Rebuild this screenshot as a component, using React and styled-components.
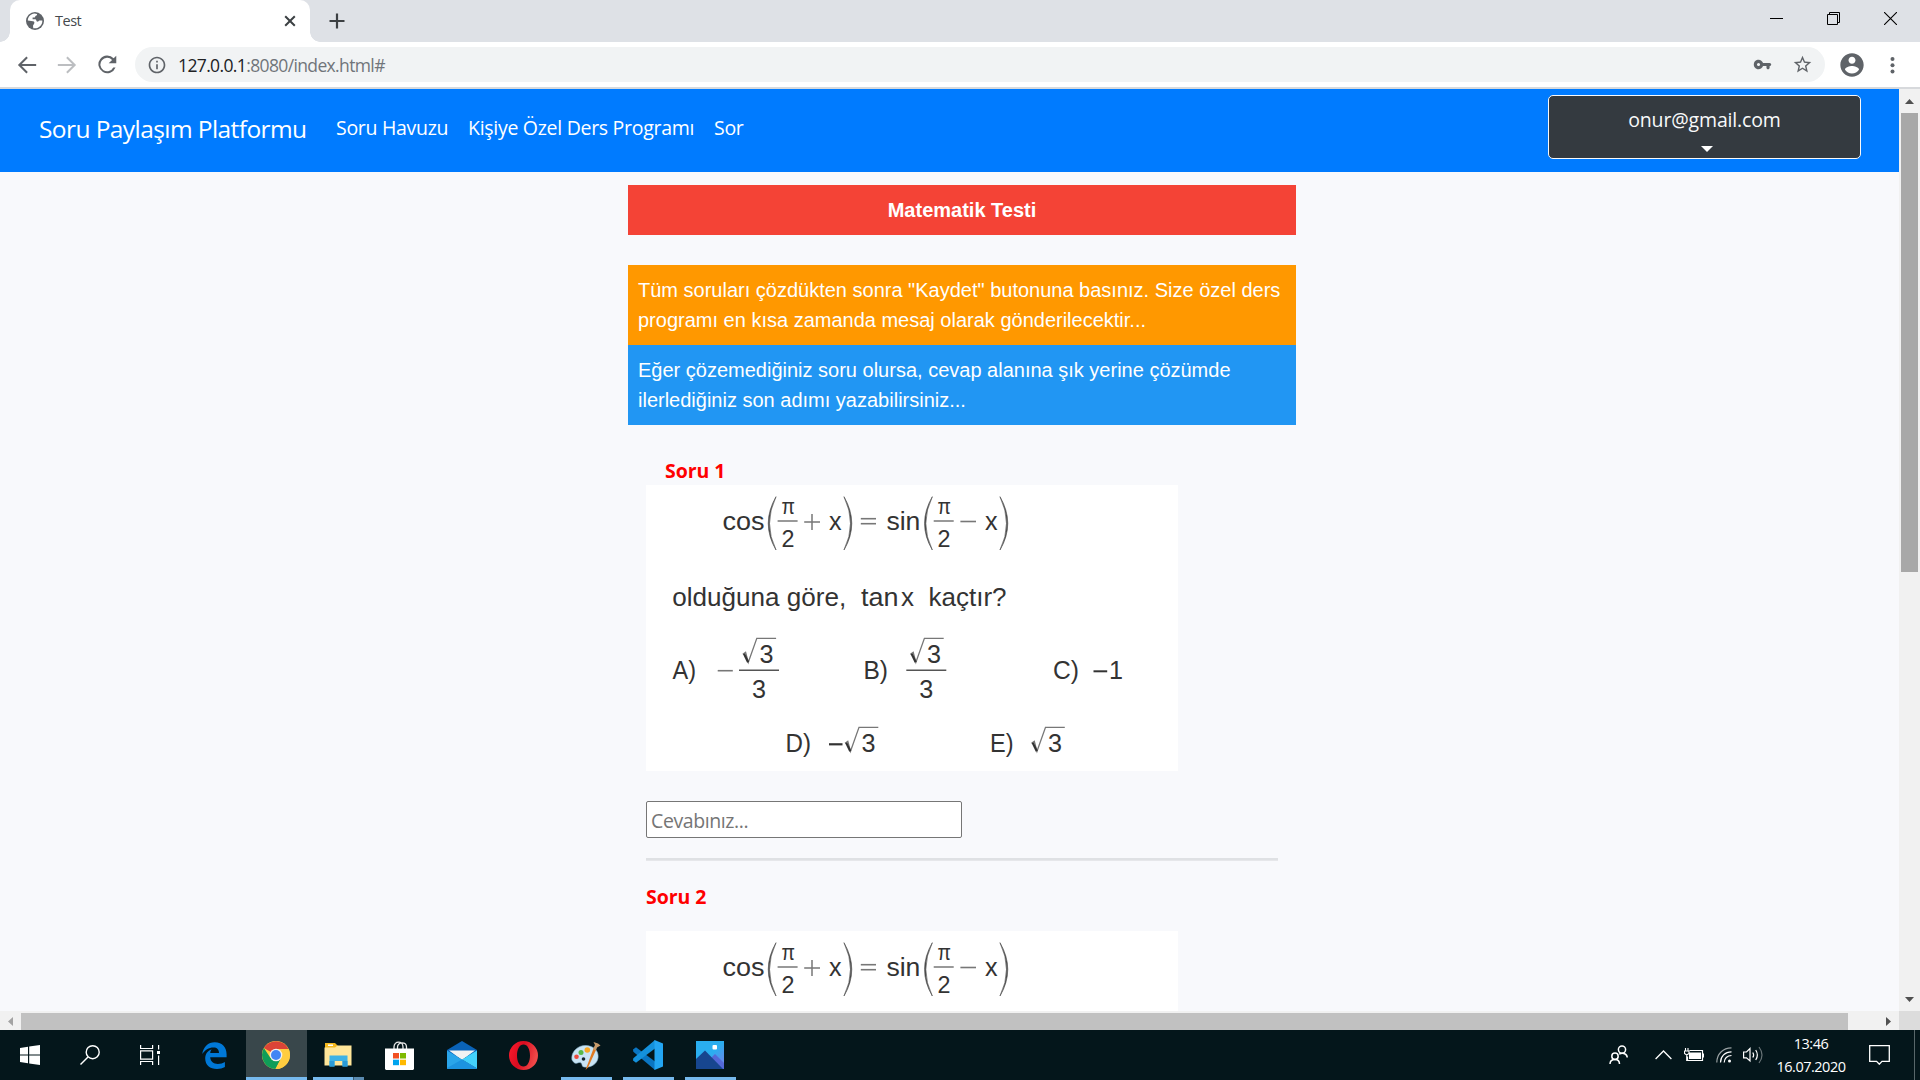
import React from "react";
import styled, { createGlobalStyle } from "styled-components";

const UI = `"Open Sans", "Noto Sans", sans-serif`;
const ARIAL = `"Liberation Sans", Arial, sans-serif`;

const GlobalStyle = createGlobalStyle`
  * { box-sizing: border-box; }
  html, body { margin: 0; padding: 0; overflow: hidden; }
  svg { display: block; flex: none; }
`;

const Screen = styled.div`
  width: 1920px;
  height: 1080px;
  display: flex;
  flex-direction: column;
  overflow: hidden;
  background: #f8f9fc;
  font-family: ${UI};
`;

const Label = styled.span`
  display: block;
  white-space: nowrap;
  font-size: ${(p) => p.$size}px;
  line-height: ${(p) => p.$line}px;
  letter-spacing: ${(p) => p.$track || 0}px;
  font-weight: ${(p) => p.$weight || 400};
  color: ${(p) => p.$color};
`;

/* ---------- browser chrome ---------- */

const TabStrip = styled.header`
  height: 42px;
  flex: none;
  display: flex;
  background: #dee1e6;
`;

const TabEdge = styled.div`
  width: 10px;
  height: 42px;
  background: radial-gradient(circle at ${(p) => (p.$right ? "100%" : "0")} 32px, #dee1e6 9.5px, #fff 10px);
  clip-path: inset(32px 0 0 0);
`;

const Tab = styled.div`
  width: 300px;
  height: 42px;
  padding: 0 14px 0 16px;
  display: flex;
  align-items: center;
  background: #fff;
  border-radius: 10px 10px 0 0;
`;

const TabTitle = styled.div`
  flex: 1;
  padding-left: 11px;
`;

const NewTab = styled.div`
  padding: 13px 0 0 9px;
`;

const WindowButtons = styled.div`
  margin-left: auto;
  padding-right: 1px;
  display: flex;
  height: 37px;
`;

const WindowButton = styled.div`
  width: 57px;
  display: flex;
  align-items: center;
  justify-content: center;
`;

const Toolbar = styled.div`
  height: 47px;
  flex: none;
  display: flex;
  align-items: center;
  padding: 0 17px 0 17px;
  background: #fff;
  border-bottom: 2px solid #d7d9dc;
`;

const NavIcons = styled.div`
  width: 118px;
  display: flex;
  gap: 20px;
`;

const AddressBar = styled.div`
  width: 1690px;
  height: 35px;
  border-radius: 18px;
  background: #f1f3f4;
  display: flex;
  align-items: center;
  padding: 0 12px 0 12px;
`;

const Url = styled.div`
  flex: 1;
  display: flex;
  padding-left: 11px;
`;

const AddressIcons = styled.div`
  display: flex;
  align-items: center;
  gap: 20px;
`;

const ToolbarRight = styled.div`
  flex: 1;
  display: flex;
  align-items: center;
  padding-left: 13px;
  gap: 24px;
`;

/* ---------- page ---------- */

const Viewport = styled.div`
  height: 922px;
  flex: none;
  display: flex;
`;

const Page = styled.main`
  width: 1899px;
  height: 922px;
  overflow: hidden;
  background: #f8f9fc;
`;

const Navbar = styled.nav`
  height: 83px;
  background: #007bff;
  display: flex;
  align-items: flex-start;
  padding: 6px 38px 0 38px;
`;

const Brand = styled.div`
  width: 298px;
  padding: 15px 0 0 1px;
`;

const NavItem = styled.div`
  width: ${(p) => p.$width}px;
  padding-top: 18px;
`;

const UserButton = styled.div`
  margin-left: auto;
  width: 313px;
  height: 64px;
  border: 1px solid #f8f9fa;
  border-radius: 5px;
  background: #343a40;
  display: flex;
  flex-direction: column;
  align-items: center;
  padding-top: 9px;
`;

const Caret = styled.div`
  margin-top: 11px;
  margin-left: 5px;
  border-top: 6px solid #fff;
  border-left: 6px solid transparent;
  border-right: 6px solid transparent;
`;

const Content = styled.section`
  width: 668px;
  margin: 13px 0 0 628px;
`;

const Banner = styled.div`
  padding: 10px;
  margin-bottom: ${(p) => p.$gap || 0}px;
  background: ${(p) => p.$bg};
  color: #fff;
  font-family: ${ARIAL};
  font-size: 20px;
  line-height: 30px;
  font-weight: ${(p) => (p.$title ? 700 : 400)};
  text-align: ${(p) => (p.$title ? "center" : "left")};
  white-space: nowrap;
`;

const Questions = styled.div`
  padding: 32px 18px 0;
`;

const QuestionTitle = styled.div`
  padding-left: ${(p) => p.$indent || 0}px;
  margin-bottom: ${(p) => p.$gap || 0}px;
`;

const Answer = styled.input`
  display: block;
  width: 316px;
  height: 37px;
  margin: 30px 0 20px;
  padding: 2px 4px 0;
  border: 1px solid #767676;
  border-radius: 2px;
  background: #fff;
  font-family: ${UI};
  font-size: 19.5px;
  letter-spacing: -0.4px;
  outline: none;
  &::placeholder { color: #757575; opacity: 1; }
`;

const Divider = styled.div`
  height: 3px;
  margin-bottom: 22px;
  background: linear-gradient(#dfe1e4 0 2px, #e6e7ea 2px 3px);
`;

/* ---------- scrollbars ---------- */

const VScroll = styled.div`
  width: 21px;
  height: 922px;
  background: #f1f1f1;
  display: flex;
  flex-direction: column;
  align-items: center;
  justify-content: space-between;
`;

const VThumb = styled.div`
  width: 17px;
  height: 459px;
  margin-bottom: auto;
  background: #a8a8a8;
`;

const ArrowBox = styled.div`
  width: 21px;
  height: ${(p) => p.$height}px;
  display: flex;
  align-items: center;
  justify-content: center;
`;

const HScroll = styled.div`
  height: 19px;
  flex: none;
  display: flex;
  background: #f1f1f1;
`;

const HThumb = styled.div`
  width: 1827px;
  height: 17px;
  margin-top: 2px;
  margin-right: auto;
  background: #c1c1c1;
`;

const Corner = styled.div`
  width: 21px;
  background: #dcdcdc;
`;

/* ---------- taskbar ---------- */

const Taskbar = styled.footer`
  height: 50px;
  flex: none;
  display: flex;
  background: #04161b;
`;

const Task = styled.div`
  width: ${(p) => p.$width}px;
  height: 50px;
  display: flex;
  flex-direction: column;
  align-items: center;
  background: ${(p) => (p.$active ? "#39474b" : "transparent")};
`;

const TaskIcon = styled.div`
  height: 47px;
  width: 100%;
  padding-top: 3px;
  padding-right: ${(p) => p.$shift || 0}px;
  display: flex;
  align-items: center;
  justify-content: center;
`;

const TaskLine = styled.div`
  width: ${(p) => p.$width}px;
  height: 3px;
  background: ${(p) => (p.$split ? "linear-gradient(90deg, #76b9ed 40px, #3a5a70 40px 41px, #5a8ab0 41px)" : "#76b9ed")};
`;

const Tray = styled.div`
  margin-left: auto;
  display: flex;
  align-items: center;
`;

const TrayItem = styled.div`
  width: ${(p) => p.$width}px;
  padding-right: ${(p) => p.$right || 0}px;
  display: flex;
  justify-content: center;
`;

const Clock = styled.div`
  width: 74px;
  display: flex;
  flex-direction: column;
  align-items: center;
`;

const ShowDesktop = styled.div`
  width: 6px;
  height: 50px;
  border-left: 1px solid #58666a;
`;

/* ---------- icons ---------- */

const Mat = ({ d, size = 24, color = "#5f6368", stroke }) => (
  <svg width={size} height={size} viewBox="0 0 24 24">
    <path d={d} fill={color} stroke={stroke} />
  </svg>
);

const Triangle = ({ dir, color }) => {
  const d = { up: "M0 5 L4.5 0 L9 5Z", down: "M0 0 H9 L4.5 5Z", left: "M5 0 V9 L0 4.5Z", right: "M0 0 V9 L5 4.5Z" }[dir];
  const flat = dir === "up" || dir === "down";
  return (
    <svg width={flat ? 9 : 5} height={flat ? 5 : 9}>
      <path d={d} fill={color} />
    </svg>
  );
};

const Globe = () => (
  <svg width="18" height="18" viewBox="0 0 18 18">
    <circle cx="9" cy="9" r="9" fill="#5f6368" />
    <path d="M7 1.8C4 2.6 1.8 5.5 1.8 8.6L7 9.2C8.4 9.4 8.6 10.6 8.2 11.4L7.2 13.2C6.8 13.8 7 14.4 7.2 14.8V16.2C13 17.2 16.8 12 16.3 8.4H13.6C12.4 8.4 12.4 10 11.2 9.6C10 9.2 10.8 7.6 9.4 7.2H6.6V5.6H8.4C9.6 5.2 8.8 4.2 9.8 3.8C11 3.4 11.2 2.6 11 2A7.6 7.6 0 0 0 7 1.8Z" fill="#fff" />
  </svg>
);

const WindowsLogo = () => (
  <svg width="20" height="20" viewBox="0 0 20 20" fill="#fff">
    <path d="M0 2.9 8 1.8V9.4H0Z M9.2 1.6 20 0V9.4H9.2Z M0 10.6H8V18.2L0 17.1Z M9.2 10.6H20V20L9.2 18.4Z" />
  </svg>
);

const SearchIcon = () => (
  <svg width="20" height="20" viewBox="0 0 20 20" fill="none" stroke="#fff" strokeWidth="1.4">
    <circle cx="12.7" cy="7.2" r="6.5" />
    <path d="M8 12 .5 19.5" />
  </svg>
);

const TaskView = () => (
  <svg width="21" height="20" viewBox="0 0 21 20" fill="none" stroke="#fff" strokeWidth="1.2">
    <path d="M.6 0V3.5H12.6V0M.6 20V16.5H12.6V20M.6 5.8H12.6V14.2H.6ZM18.6 0V4.5M18.6 10.5V20" />
    <rect x="17" y="6" width="3" height="3" fill="#fff" stroke="none" />
  </svg>
);

const Edge = () => (
  <svg width="25" height="27" viewBox="0 0 25 27">
    <path d="M.2 12C1.4 4.800 6 .2 12.800.2 20.500.2 24.600 5.500 24.600 12.200V15.300H8.200C8.400 19.800 11.800 22 15.800 22 18.600 22 21 21.200 22.900 20V25.100C20.800 26.400 18 27 15 27 8 27 3.200 23.200 3.200 16.500 3.200 12 5.600 8.900 9.600 7.200 8.800 8.200 8.300 9.500 8.200 10.900H17C17 7.400 15 5.400 11.500 5.400 6.800 5.400 2.700 8 .2 12Z" fill="#0078d7" />
  </svg>
);

const Chrome = () => (
  <svg width="28" height="28" viewBox="0 0 28 28">
    <circle cx="14" cy="14" r="14" fill="#ffcd40" />
    <path d="M14 14 1.900 7A14 14 0 0 1 26.100 7.200L26 8H14Z" fill="#db4437" />
    <path d="M1.900 7A14 14 0 0 0 13.500 28L19 17.500 14 14 8.500 17Z" fill="#0f9d58" />
    <path d="M14 8H26.600A14 14 0 0 1 13.500 28L19.200 17Z" fill="#ffcd40" />
    <circle cx="14" cy="14" r="6.300" fill="#f1f1f1" />
    <circle cx="14" cy="14" r="5" fill="#4285f4" />
  </svg>
);

const Explorer = () => (
  <svg width="28" height="24" viewBox="0 0 28 24">
    <path d="M1 0H11L14 3V6H1Z" fill="#f5b91e" />
    <rect x="4" y="1.500" width="5" height="1.500" fill="#fff" />
    <path d="M.5 4.500H11L13.500 2.500H27.500V22.500H.5Z" fill="#ffe69a" />
    <path d="M5.500 12.500H23.500V23.500H18.500V18H10.500V23.500H5.500Z" fill="#3db2e6" />
    <path d="M5.500 18H10.500V23.500H5.500ZM18.500 18H23.500V23.500H18.500Z" fill="#2a9bd8" />
  </svg>
);

const Store = () => (
  <svg width="29" height="29" viewBox="0 0 29 29">
    <path d="M9 8V6C9 -.5 18 -.5 18 6V8M12.500 8V6C12.500 .5 21.500 .5 21.500 6V8" fill="none" stroke="#e8e8e8" strokeWidth="1.300" />
    <path d="M0 7.500H29V28L28 29H1L0 28Z" fill="#fff" />
    <rect x="8" y="12" width="6" height="5.500" fill="#f25022" />
    <rect x="15" y="12" width="6" height="5.500" fill="#7fba00" />
    <rect x="8" y="18.700" width="6" height="5.500" fill="#00a4ef" />
    <rect x="15" y="18.700" width="6" height="5.500" fill="#ffb900" />
  </svg>
);

const Mail = () => (
  <svg width="30" height="28" viewBox="0 0 30 28">
    <path d="M0 9 15 0 30 9V16H0Z" fill="#0a63b8" />
    <path d="M2 9.500H28L15 19Z" fill="#f3f3f3" />
    <path d="M0 9.500 30 27.500C30 28 29.500 28 29 28H1Q0 28 0 27Z" fill="#2aa5ea" />
    <path d="M30 9.500 15 18.500 30 27.500Z" fill="#43d1fb" />
    <path d="M15 18.500 0 27Q0 28 1 28H29Q30 28 30 27.500Z" fill="#1c93e0" />
  </svg>
);

const Opera = () => (
  <svg width="29" height="29" viewBox="0 0 29 29">
    <defs>
      <linearGradient id="operaRing" x1="0" x2="1" y1="0" y2="0.300">
        <stop offset="0" stopColor="#ff1b2d" />
        <stop offset="0.500" stopColor="#d90c20" />
        <stop offset="1" stopColor="#f04848" />
      </linearGradient>
    </defs>
    <path fillRule="evenodd" fill="url(#operaRing)" d="M14.500 0A14.500 14.500 0 1 0 14.500 29A14.500 14.500 0 1 0 14.500 0ZM14.500 3.500C18.500 3.500 21 8.400 21 14.500S18.500 25.500 14.500 25.500S8 20.600 8 14.500S10.500 3.500 14.500 3.500Z" />
  </svg>
);

const Paint = () => (
  <svg width="30" height="29" viewBox="0 0 30 29">
    <path d="M1 19C-.5 11 7 4 15 4.500 23 5 28 10 27 17 26 23 20 27 13 26 10 25.500 12 22 9 21.500 6 21 5 25 1 19Z" fill="#c9e4f4" stroke="#8db7d0" strokeWidth=".6" />
    <circle cx="5.500" cy="15.800" r="2.300" fill="#ee4b3e" />
    <circle cx="10" cy="11.500" r="2.500" fill="#58b947" />
    <circle cx="16.300" cy="9" r="2.800" fill="#f9a825" />
    <circle cx="12.500" cy="18" r="1.800" fill="#15252c" />
    <path d="M14.500 29 22.500 7.500 25 9 17 26.500Z" fill="#e07a22" />
    <path d="M22 8 24 4 22.500 1 27 2.500 29.500 4.500 26 6.500 25 9.500Z" fill="#c79b6b" />
  </svg>
);

const VSCode = () => (
  <svg width="30" height="30" viewBox="0 0 30 30">
    <path d="M0 9.500 3 7.200 22 21.500V30L.3 11.800Z" fill="#0a75c2" />
    <path d="M0 20.500 3 22.800 22 8.500V0L.3 18.200Z" fill="#1491dc" />
    <path d="M21.500 0 30 3.500V26.500L21.500 30Z" fill="#23a5f2" />
  </svg>
);

const Photos = () => (
  <svg width="28" height="28" viewBox="0 0 28 28">
    <defs>
      <linearGradient id="photoSky" x1="0" y1="0" x2="1" y2="1">
        <stop offset="0.500" stopColor="#2aaef0" />
        <stop offset="1" stopColor="#7c7be8" />
      </linearGradient>
    </defs>
    <rect width="28" height="28" fill="url(#photoSky)" />
    <path d="M12 20 19 13 28 22V28H12Z" fill="#5468d8" />
    <path d="M0 18 9 9.500 27 28H0Z" fill="#17468f" />
    <rect x="16.500" y="4" width="4.500" height="4.500" rx="1" fill="#fff" />
  </svg>
);

const People = () => (
  <svg width="19" height="20" viewBox="0 0 19 20" fill="none" stroke="#fff" strokeWidth="1.500">
    <circle cx="13" cy="4.600" r="3.600" />
    <circle cx="6" cy="11.200" r="3.200" />
    <path d="M1 19C1 16 3 14.400 6 14.400S10.500 16 10.500 19M10.200 9.200C14 7.200 18.200 9 18.200 12.500" />
  </svg>
);

const Battery = () => (
  <svg width="20" height="14" viewBox="0 0 20 14" fill="none" stroke="#fff">
    <path d="M5.500 2.500H18.500V12.500H3.500V8.500" strokeWidth="1.200" />
    <rect x="5" y="4.500" width="12" height="6.500" fill="#fff" stroke="none" />
    <path d="M19.500 5.500V9.500M1.500 0V3M4 0V3M.5 3H5V5.500L2.700 7 .5 5.500ZM2.700 7V12.500H4" strokeWidth="1.100" />
  </svg>
);

const Wifi = () => (
  <svg width="16" height="16" viewBox="0 0 16 16" fill="none" stroke="#fff" strokeWidth="1.200">
    <path d="M.8 15.500C.8 7 7 .8 15.500 .8" opacity=".6" />
    <path d="M4.500 15.500C4.500 9.500 9 4.800 15.500 4.800M8.200 15.500C8.200 11.500 11.200 8.500 15.500 8.500" />
    <circle cx="13.500" cy="14" r="1.500" fill="#fff" stroke="none" />
  </svg>
);

const Volume = () => (
  <svg width="21" height="18" viewBox="0 0 21 18" fill="none" stroke="#fff" strokeWidth="1.200">
    <path d="M.6 6H3.500L7 2.500V15L3.500 11.800H.6ZM9.800 6.500Q11.500 9 9.800 11.500M12.700 4Q16 9 12.700 14" />
    <path d="M16 1Q22 9 16 17" opacity=".4" />
  </svg>
);

const Notification = () => (
  <svg width="21" height="20" viewBox="0 0 21 20" fill="none" stroke="#fff" strokeWidth="1.300">
    <path d="M.7 .7H20.300V16.300H13L10.300 19.200 7.600 16.300H.7Z" />
  </svg>
);

/* ---------- math question ---------- */

const MathText = styled.text`
  font-family: ${ARIAL};
  font-size: ${(p) => p.$size || 26}px;
  fill: #333;
`;

const QuestionImage = styled.svg`
  background: #fff;
`;

const T = ({ x, y, w, size, children }) => (
  <MathText x={x} y={y} $size={size} textLength={w} lengthAdjust="spacingAndGlyphs">{children}</MathText>
);

const Line = ({ x1, x2, y, color = "#777", w = 1.6 }) => (
  <path d={"M" + x1 + " " + y + "H" + x2} stroke={color} strokeWidth={w} />
);

const Bracket = ({ x, right }) => (
  <path
    d={right ? `M${x - 8} 11.700Q${x + 7.500} 38.500 ${x - 8} 65Q${x + 5} 38.500 ${x - 8} 11.700Z` : `M${x + 8} 11.700Q${x - 7.500} 38.500 ${x + 8} 65Q${x - 5} 38.500 ${x + 8} 11.700Z`}
    fill="#444"
    stroke="#555"
    strokeWidth=".7"
  />
);

const PiHalf = ({ x }) => (
  <g>
    <T x={x + 3.800} y={28.800} w={13.500} size={22}>π</T>
    <Line x1={x} x2={x + 20} y={36} color="#999" w={2} />
    <T x={x + 3.800} y={62.200} w={13} size={24}>2</T>
  </g>
);

const Root = ({ x, y }) => (
  <g>
    <path d={`M${x} ${y + 16}L${x + 2.800} ${y + 14}L${x + 5.500} ${y + 24}L${x + 14} ${y}H${x + 33.300}`} fill="none" stroke="#777" strokeWidth="1.300" />
    <path d={`M${x + 1.200} ${y + 15.500}L${x + 5.300} ${y + 24}`} stroke="#333" strokeWidth="2.200" />
    <T x={x + 16.600} y={y + 25} w={14} size={25}>3</T>
  </g>
);

const Equation = () => (
  <g>
    <T x={76.400} y={44.700} w={42}>cos</T>
    <Bracket x={122} />
    <PiHalf x={131.600} />
    <path d="M158.200 37H174M166 29V45" stroke="#777" strokeWidth="1.500" />
    <T x={183} y={44.700} w={12.600}>x</T>
    <Bracket x={206} right />
    <Line x1={214.800} x2={230} y={33.700} />
    <Line x1={214.800} x2={230} y={38.700} />
    <T x={240.400} y={44.700} w={34}>sin</T>
    <Bracket x={278.300} />
    <PiHalf x={287.700} />
    <Line x1={314.400} x2={330} y={36.500} />
    <T x={339} y={44.700} w={12.600}>x</T>
    <Bracket x={362} right />
  </g>
);

const Choices = () => (
  <g>
    <T x={26.300} y={121} w={174}>olduğuna göre,</T>
    <T x={215} y={121} w={37.500}>tan</T>
    <T x={255} y={121} w={13}>x</T>
    <T x={282.500} y={121} w={78}>kaçtır?</T>
    <T x={26.500} y={194} w={23.500} size={25}>A)</T>
    <Line x1={71.700} x2={86.800} y={185.700} />
    <Line x1={93} x2={133} y={185.300} color="#555" w={1.400} />
    <Root x={96.800} y={153.300} />
    <T x={106} y={212.700} w={14} size={25}>3</T>
    <T x={217.500} y={194} w={24.500} size={25}>B)</T>
    <Line x1={260.300} x2={300.300} y={185.300} color="#555" w={1.400} />
    <Root x={264.400} y={153.300} />
    <T x={273.300} y={212.700} w={14} size={25}>3</T>
    <T x={407} y={194} w={26} size={25}>C)</T>
    <Line x1={447.500} x2={461.200} y={186.300} color="#333" w={2} />
    <T x={463} y={194} w={14} size={25}>1</T>
    <T x={139.500} y={267} w={25.500} size={25}>D)</T>
    <Line x1={183} x2={196.500} y={259.300} color="#333" w={2.200} />
    <Root x={199} y={242.300} />
    <T x={344} y={267} w={23.500} size={25}>E)</T>
    <Root x={385.500} y={242.300} />
  </g>
);

const Question = ({ height, children }) => (
  <QuestionImage width="532" height={height} viewBox={`0 0 532 ${height}`}>
    <Equation />
    {children}
  </QuestionImage>
);

const TASKS = [
  { icon: <Edge />, width: 62, shift: 2 },
  { icon: <Chrome />, width: 61, active: true, line: 61, shift: 1 },
  { icon: <Explorer />, width: 62, line: 51, split: true },
  { icon: <Store />, width: 62, shift: 1 },
  { icon: <Mail />, width: 62 },
  { icon: <Opera />, width: 62, shift: 1 },
  { icon: <Paint />, width: 62, line: 51 },
  { icon: <VSCode />, width: 62, line: 51 },
  { icon: <Photos />, width: 62, line: 51 },
];

export default function App() {
  return (
    <Screen>
      <GlobalStyle />
      <TabStrip>
        <TabEdge />
        <Tab>
          <Globe />
          <TabTitle><Label $size={14.5} $line={20} $track={-0.5} $color="#45494d">Test</Label></TabTitle>
          <svg width="12" height="12" viewBox="0 0 12 12"><path d="M1.200 1.200 10.800 10.800M10.800 1.200 1.200 10.800" stroke="#3c4043" strokeWidth="2" /></svg>
        </Tab>
        <TabEdge $right />
        <NewTab>
          <svg width="16" height="16" viewBox="0 0 16 16"><path d="M8 .5V15.500M.5 8H15.500" stroke="#3c4043" strokeWidth="2.200" /></svg>
        </NewTab>
        <WindowButtons>
          <WindowButton><svg width="13" height="2"><rect width="13" height="1" fill="#000" /></svg></WindowButton>
          <WindowButton>
            <svg width="13" height="13" fill="none" stroke="#000"><path d="M.5 2.500H10.500V12.500H.5ZM2.500 2.500V.5H12.500V10.500H10.500" /></svg>
          </WindowButton>
          <WindowButton><svg width="13" height="13"><path d="M0 0 13 13M13 0 0 13" stroke="#000" strokeWidth="1.100" /></svg></WindowButton>
        </WindowButtons>
      </TabStrip>

      <Toolbar>
        <NavIcons>
          <Mat size={20} d="M23 10.700H5.800L13 3.500 11.300 1.800 1.100 12 11.300 22.200 13 20.500 5.800 13.300H23Z" />
          <Mat size={20} color="#bcbec1" d="M1 10.700H18.200L11 3.500 12.700 1.800 22.900 12 12.700 22.200 11 20.500 18.200 13.300H1Z" />
          <svg width="20" height="20" viewBox="2.300 2.800 19.200 19.200"><path d="M18.300 5.900A8.500 8.500 0 1 0 20.100 14.800H17.900A6.500 6.500 0 1 1 16.800 7.500L13.500 10.800H20.800V3.500Z" fill="#5f6368" /></svg>
        </NavIcons>
        <AddressBar>
          <Mat size={20} d="M11 17h2v-6h-2v6zm1-15C6.480 2 2 6.480 2 12s4.480 10 10 10 10-4.480 10-10S17.520 2 12 2zm0 18c-4.410 0-8-3.590-8-8s3.590-8 8-8 8 3.590 8 8-3.590 8-8 8zM11 9h2V7h-2v2z" />
          <Url>
            <Label $size={17.5} $line={24} $track={-0.63} $color="#202124">127.0.0.1</Label>
            <Label $size={17.5} $line={24} $track={-0.63} $color="#70757a">:8080/index.html#</Label>
          </Url>
          <AddressIcons>
            <Mat size={19} d="M12.650 10C11.700 7.310 8.900 5.500 5.770 6.120c-2.290.460-4.150 2.290-4.630 4.580C.320 14.570 3.260 18 7 18c2.610 0 4.830-1.670 5.650-4H17v2c0 1.100.9 2 2 2s2-.9 2-2v-2c1.100 0 2-.9 2-2s-.9-2-2-2h-8.350zM7 14c-1.100 0-2-.9-2-2s.9-2 2-2 2 .9 2 2-.9 2-2 2z" />
            <Mat size={21} d="M22 9.240l-7.190-.620L12 2 9.190 8.630 2 9.240l5.460 4.730L5.820 21 12 17.270 18.180 21l-1.630-7.030L22 9.240zM12 15.400l-3.760 2.270 1-4.280-3.320-2.880 4.380-.380L12 6.100l1.710 4.040 4.380.380-3.320 2.880 1 4.280L12 15.400z" />
          </AddressIcons>
        </AddressBar>
        <ToolbarRight>
          <Mat size={28} d="M12 2C6.480 2 2 6.480 2 12s4.480 10 10 10 10-4.480 10-10S17.520 2 12 2zm0 3c1.660 0 3 1.340 3 3s-1.340 3-3 3-3-1.340-3-3 1.340-3 3-3zm0 14.200c-2.500 0-4.710-1.280-6-3.220.030-1.990 4-3.080 6-3.080 1.990 0 5.970 1.090 6 3.080-1.290 1.940-3.500 3.220-6 3.220z" />
          <svg width="5" height="18" fill="#5f6368"><circle cx="2.500" cy="3" r="2" /><circle cx="2.500" cy="9.300" r="2" /><circle cx="2.500" cy="15.600" r="2" /></svg>
        </ToolbarRight>
      </Toolbar>

      <Viewport>
        <Page>
          <Navbar>
            <Brand><Label $size={24.5} $line={38} $track={-0.58} $color="#fff">Soru Paylaşım Platformu</Label></Brand>
            <NavItem $width={132}><Label $size={19.5} $line={30} $track={-0.29} $color="#fff">Soru Havuzu</Label></NavItem>
            <NavItem $width={246}><Label $size={19.5} $line={30} $track={-0.29} $color="#fff">Kişiye Özel Ders Programı</Label></NavItem>
            <NavItem $width={60}><Label $size={19.5} $line={30} $track={-0.29} $color="#fff">Sor</Label></NavItem>
            <UserButton>
              <Label $size={19.5} $line={30} $track={-0.15} $color="#f8f9fa">onur@gmail.com</Label>
              <Caret />
            </UserButton>
          </Navbar>
          <Content>
            <Banner $bg="#f44336" $title $gap={30}>Matematik Testi</Banner>
            <Banner $bg="#ff9800">
              Tüm soruları çözdükten sonra "Kaydet" butonuna basınız. Size özel ders<br />
              programı en kısa zamanda mesaj olarak gönderilecektir...
            </Banner>
            <Banner $bg="#2196f3">
              Eğer çözemediğiniz soru olursa, cevap alanına şık yerine çözümde<br />
              ilerlediğiniz son adımı yazabilirsiniz...
            </Banner>
            <Questions>
              <QuestionTitle $indent={19}>
                <Label $size={19.5} $line={28} $track={-0.05} $weight={700} $color="#f00">Soru 1</Label>
              </QuestionTitle>
              <Question height={286}><Choices /></Question>
              <Answer placeholder="Cevabınız..." />
              <Divider />
              <QuestionTitle $gap={20}>
                <Label $size={19.5} $line={28} $track={-0.05} $weight={700} $color="#f00">Soru 2</Label>
              </QuestionTitle>
              <Question height={80} />
            </Questions>
          </Content>
        </Page>
        <VScroll>
          <ArrowBox $height={24}><Triangle dir="up" color="#505050" /></ArrowBox>
          <VThumb />
          <ArrowBox $height={24}><Triangle dir="down" color="#505050" /></ArrowBox>
        </VScroll>
      </Viewport>

      <HScroll>
        <ArrowBox $height={21}><Triangle dir="left" color="#a3a3a3" /></ArrowBox>
        <HThumb />
        <ArrowBox $height={21}><Triangle dir="right" color="#505050" /></ArrowBox>
        <Corner />
      </HScroll>

      <Taskbar>
        <Task $width={60}><TaskIcon><WindowsLogo /></TaskIcon></Task>
        <Task $width={60}><TaskIcon><SearchIcon /></TaskIcon></Task>
        <Task $width={60}><TaskIcon><TaskView /></TaskIcon></Task>
        <Task $width={4} />
        {TASKS.map((t, i) => (
          <Task key={i} $width={t.width} $active={t.active}>
            <TaskIcon $shift={t.shift}>{t.icon}</TaskIcon>
            {t.line && <TaskLine $width={t.line} $split={t.split} />}
          </Task>
        ))}
        <Tray>
          <TrayItem $width={72}><People /></TrayItem>
          <TrayItem $width={18}>
            <svg width="17" height="10" fill="none" stroke="#fff" strokeWidth="1.300"><path d="M.6 9 8.500 1 16.400 9" /></svg>
          </TrayItem>
          <TrayItem $width={44}><Battery /></TrayItem>
          <TrayItem $width={16}><Wifi /></TrayItem>
          <TrayItem $width={42}><Volume /></TrayItem>
          <Clock>
            <Label $size={14.5} $line={23} $track={-0.5} $color="#fff">13:46</Label>
            <Label $size={14.5} $line={23} $track={-0.5} $color="#fff">16.07.2020</Label>
          </Clock>
          <TrayItem $width={66} $right={4}><Notification /></TrayItem>
          <ShowDesktop />
        </Tray>
      </Taskbar>
    </Screen>
  );
}
